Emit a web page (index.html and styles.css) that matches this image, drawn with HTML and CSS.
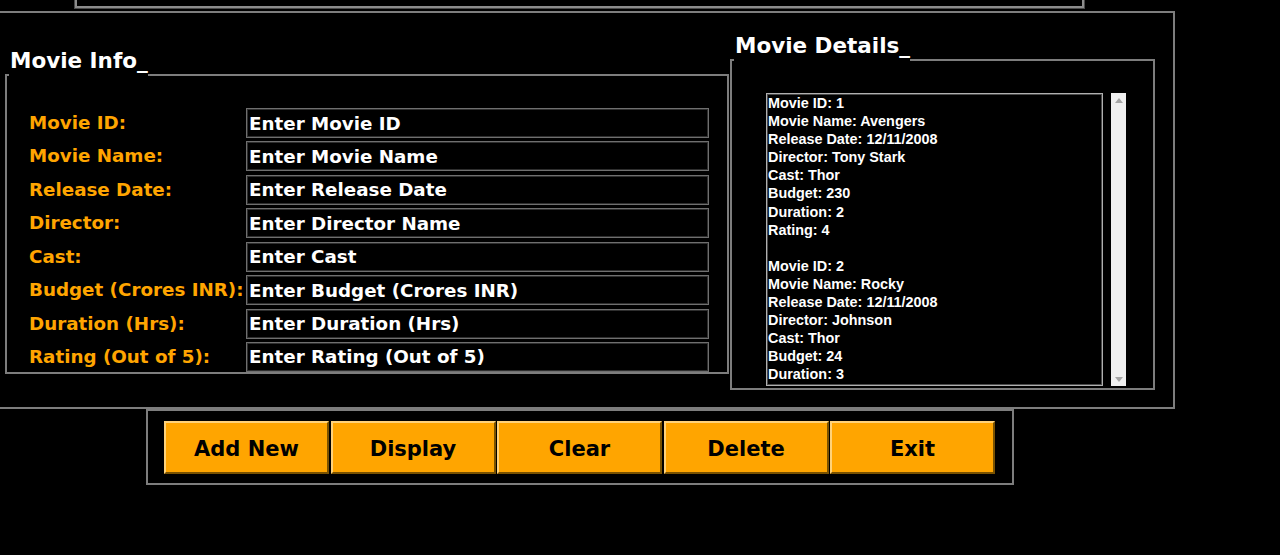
FILE: index.html
```html
<!DOCTYPE html>
<html lang="en">
<head>
<meta charset="utf-8">
<title>Movie Info</title>
<link rel="stylesheet" href="styles.css">
</head>
<body>
<div class="top-panel"></div>
<div class="main-frame">
  <section class="group group-info">
    <div class="group-head"><h2 class="group-title">Movie Info_</h2></div>
    <div class="group-body info-body">
      <label class="field-label" for="f-id">Movie ID:</label>
      <input class="field-input" id="f-id" type="text" value="Enter Movie ID">
      <label class="field-label" for="f-name">Movie Name:</label>
      <input class="field-input" id="f-name" type="text" value="Enter Movie Name">
      <label class="field-label" for="f-date">Release Date:</label>
      <input class="field-input" id="f-date" type="text" value="Enter Release Date">
      <label class="field-label" for="f-dir">Director:</label>
      <input class="field-input" id="f-dir" type="text" value="Enter Director Name">
      <label class="field-label" for="f-cast">Cast:</label>
      <input class="field-input" id="f-cast" type="text" value="Enter Cast">
      <label class="field-label" for="f-budget">Budget (Crores INR):</label>
      <input class="field-input" id="f-budget" type="text" value="Enter Budget (Crores INR)">
      <label class="field-label" for="f-dur">Duration (Hrs):</label>
      <input class="field-input" id="f-dur" type="text" value="Enter Duration (Hrs)">
      <label class="field-label" for="f-rate">Rating (Out of 5):</label>
      <input class="field-input" id="f-rate" type="text" value="Enter Rating (Out of 5)">
    </div>
  </section>
  <section class="group group-details">
    <div class="group-head"><h2 class="group-title">Movie Details_</h2></div>
    <div class="group-body details-body">
      <div class="details-text">
        <p class="record">Movie ID: 1<br>Movie Name: Avengers<br>Release Date: 12/11/2008<br>Director: Tony Stark<br>Cast: Thor<br>Budget: 230<br>Duration: 2<br>Rating: 4</p>
        <p class="record">Movie ID: 2<br>Movie Name: Rocky<br>Release Date: 12/11/2008<br>Director: Johnson<br>Cast: Thor<br>Budget: 24<br>Duration: 3</p>
      </div>
      <div class="scrollbar">
        <span class="arrow arrow-up"></span>
        <span class="arrow arrow-down"></span>
      </div>
    </div>
  </section>
</div>
<div class="button-frame">
  <button class="btn" type="button">Add New</button>
  <button class="btn" type="button">Display</button>
  <button class="btn" type="button">Clear</button>
  <button class="btn" type="button">Delete</button>
  <button class="btn" type="button">Exit</button>
</div>
</body>
</html>
```

FILE: styles.css
```css
* { box-sizing: border-box; }

html, body {
  margin: 0;
  padding: 0;
  background: #000;
  overflow: hidden;
}

body {
  width: 1280px;
  height: 555px;
  font-family: "DejaVu Sans", Verdana, sans-serif;
  color: #fff;
}

.top-panel {
  margin: -20px 0 0 74px;
  width: 1011px;
  height: 29px;
  border: 1px solid #4a4a4a;
  box-shadow: inset 0 0 0 2px #8c8c8c;
}

.main-frame {
  margin: 2px 0 0 -10px;
  width: 1185px;
  border: 2px solid #7d7d7d;
  padding: 0 18px 17px 13px;
  display: flex;
  align-items: flex-start;
}

.group-info {
  width: 724px;
  margin-top: 35px;
}

.group-details {
  width: 425px;
  margin-top: 20px;
  margin-left: 1px;
}

.group-head {
  display: flex;
  align-items: flex-end;
  height: 28px;
}

.group-head::before {
  content: "";
  width: 4px;
  height: 0;
  border-top: 2px solid #7d7d7d;
}

.group-head::after {
  content: "";
  flex: 1;
  height: 0;
  border-top: 2px solid #7d7d7d;
}

.group-title {
  margin: 0 0 2px 1px;
  font-size: 21.5px;
  line-height: 26px;
  font-weight: bold;
  color: #fff;
  white-space: nowrap;
}

.group-body {
  border: 2px solid #7d7d7d;
  border-top: none;
}

.info-body {
  padding: 32px 18px 0 22px;
  display: grid;
  grid-template-columns: 217px 463px;
  grid-auto-rows: 30px;
  row-gap: 3.43px;
  align-items: center;
}

.field-label {
  color: #ffa500;
  font-size: 18.3px;
  font-weight: bold;
  white-space: nowrap;
  margin-top: -1px;
}

.field-input {
  height: 30px;
  width: 463px;
  margin: 0;
  padding: 0 2px;
  background: #000;
  color: #fff;
  font-family: "DejaVu Sans", Verdana, sans-serif;
  font-size: 18.3px;
  font-weight: bold;
  border: 1px solid #6f6f6f;
  box-shadow: inset 0 0 0 1px #2e2e2e;
  outline: none;
}

.details-body {
  padding: 32px 27px 2px 34px;
  display: flex;
  gap: 8px;
}

.details-text {
  width: 337px;
  height: 293px;
  overflow: hidden;
  border: 1px solid #b0b0b0;
  box-shadow: inset 0 0 0 1px #4a4a4a;
  padding: 0 0 0 1px;
  font-family: "Liberation Sans", Arial, sans-serif;
  font-weight: bold;
  font-size: 14.4px;
  line-height: 18.1px;
  color: #fff;
}

.record {
  margin: 0 0 18.1px 0;
}

.record:last-child {
  margin-bottom: 0;
}

.scrollbar {
  width: 15px;
  height: 293px;
  background: #f0f0f0;
  display: flex;
  flex-direction: column;
  justify-content: space-between;
  align-items: center;
  padding: 5px 0 4px;
}

.arrow {
  width: 0;
  height: 0;
  border-left: 4px solid transparent;
  border-right: 4px solid transparent;
}

.arrow-up { border-bottom: 5px solid #a6a6a6; }
.arrow-down { border-top: 5px solid #a6a6a6; }

.button-frame {
  margin: 0 0 0 146px;
  width: 868px;
  border: 2px solid #7d7d7d;
  padding: 10px 17px 9px 16px;
  display: flex;
  gap: 1.5px;
}

.btn {
  width: 165px;
  height: 53px;
  padding: 2px 0 0;
  margin: 0;
  background: #ffa500;
  color: #000;
  font-family: "DejaVu Sans", Verdana, sans-serif;
  font-size: 21px;
  font-weight: bold;
  border: 2px solid;
  border-color: #ffd27a #7a5200 #7a5200 #ffd27a;
}
```
